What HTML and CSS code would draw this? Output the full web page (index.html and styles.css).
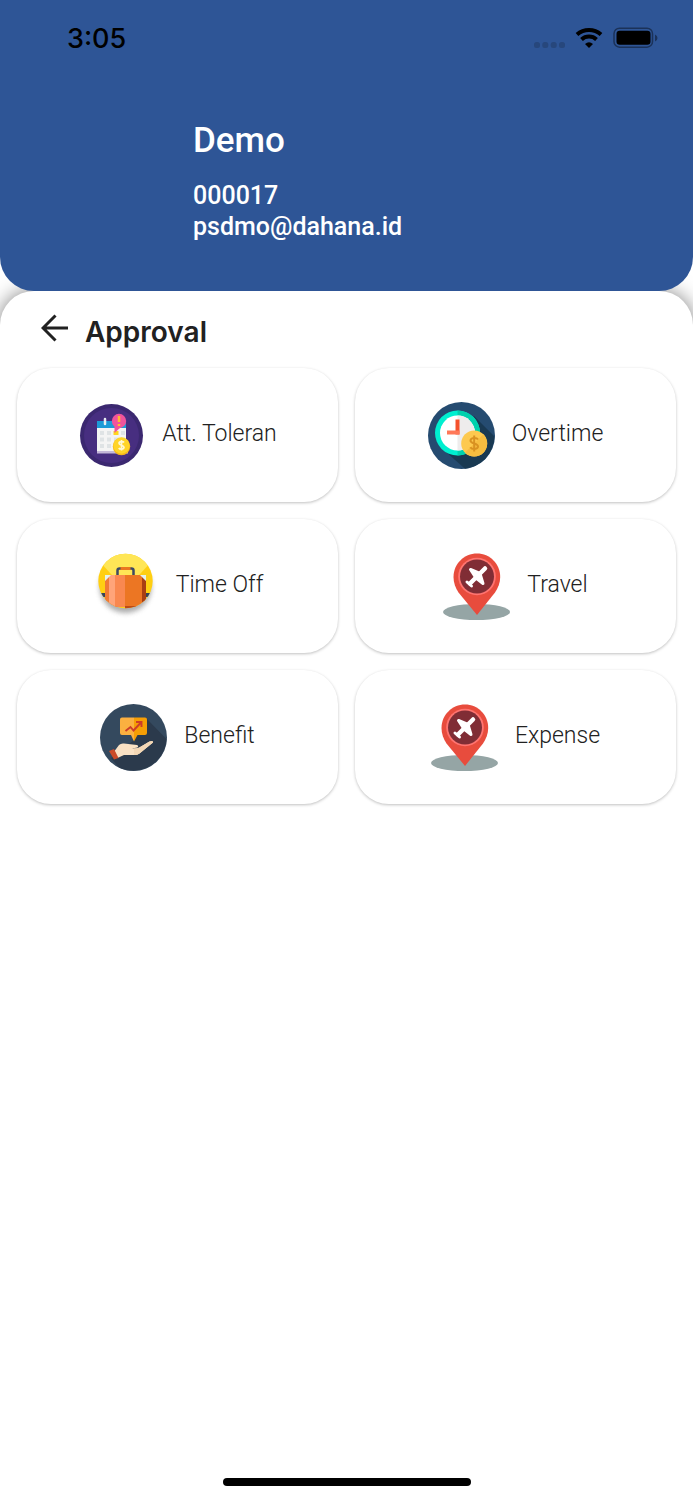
FILE: index.html
```html
<!DOCTYPE html>
<html lang="en">
<head>
<meta charset="utf-8">
<meta name="viewport" content="width=device-width, initial-scale=1">
<title>Approval</title>
<link rel="stylesheet" href="styles.css">
</head>
<body>
<svg class="defs" aria-hidden="true">
  <defs>
    <symbol id="pin" viewBox="0 0 67 67">
      <ellipse cx="33.5" cy="59" rx="33.5" ry="8" fill="#95a5a5"/>
      <path d="M34 .5C21 .5 10.500 11 10.500 24c0 6 2 11 5 15.500L34 62l18-22.500c3-4.500 5.200-9.500 5.200-15.500C57.200 11 47 .5 34 .5z" fill="#e84c3d"/>
      <circle cx="34" cy="23.500" r="18.800" fill="#ff7470"/>
      <circle cx="34" cy="23.500" r="17" fill="#802d35"/>
      <g fill="none" stroke="#fff" stroke-linecap="round" stroke-linejoin="round">
        <path d="M42 15.500L27 30.500" stroke-width="4.500"/>
        <path d="M27.500 16.500L37 20.500L40 30.500L33 25z" fill="#fff" stroke-width="3"/>
        <path d="M24 29l4.500 4" stroke-width="3"/>
      </g>
    </symbol>
  </defs>
</svg>
<div class="screen">
  <header class="header">
    <div class="status">
      <span class="time">3:05</span>
      <svg class="signals" viewBox="0 0 126 24" aria-hidden="true">
        <g fill="#27477c"><rect x="0" y="16" width="6" height="6" rx="2.500"/><rect x="8.300" y="16" width="6" height="6" rx="2.500"/><rect x="16.700" y="16" width="6" height="6" rx="2.500"/><rect x="25" y="16" width="6" height="6" rx="2.500"/></g>
        <g fill="none" stroke="#000"><path d="M43 8.500a18 18 0 0 1 24 0" stroke-width="4"/><path d="M47.500 13.500a11 11 0 0 1 15 0" stroke-width="4"/></g>
        <path d="M51 18q4-3.500 8 0l-4 4z"/>
        <rect x="80" y="2.200" width="38.500" height="19" rx="5.500" fill="none" stroke="#1b3259" stroke-width="1.500"/>
        <rect x="82.500" y="4.700" width="34" height="14" rx="3.200"/>
        <path d="M121 8.500q2.500 1 2.500 3.500t-2.500 3.500z" fill="#1b3259"/>
      </svg>
    </div>
    <div class="profile">
      <h1 class="name">Demo</h1>
      <p class="detail">000017</p>
      <p class="detail">psdmo@dahana.id</p>
    </div>
  </header>
  <main class="sheet">
    <div class="title-row">
      <button class="back" type="button" aria-label="Back">
        <svg viewBox="0 0 28 28" fill="none" stroke="#212121" stroke-width="3"><path d="M27 14H3M14.500 1.500L2 14l12.500 12.500"/></svg>
      </button>
      <h2 class="title">Approval</h2>
    </div>
    <nav class="grid">
      <button class="card" type="button">
        <svg class="icon" viewBox="0 0 67 67" aria-hidden="true">
          <circle cx="33.500" cy="33.500" r="31.500" fill="#3b2870"/><circle cx="33.500" cy="33.500" r="27.500" fill="#472e80"/>
          <path d="M19 49h31v2.500H19z" fill="#c4b8d8"/><path d="M19 22h29v27H19z" fill="#f4f4f4"/><path d="M19 19h29v7H19z" fill="#1c9bd7"/>
          <path d="M27 17v5" stroke="#e8eef2" stroke-width="2.500" stroke-linecap="round"/>
          <g fill="#dfe3e5"><path d="M22 29h4v4h-4zM29 29h4v4h-4zM22 35.500h4v4h-4zM29 35.500h4v4h-4zM36 35.500h4v4h-4zM22 42h4v4h-4zM29 42h4v4h-4zM43 29h4v4h-4z"/></g>
          <path d="M35.500 29h5v4h-5z" fill="#ffd51f"/>
          <circle cx="41" cy="19" r="7.200" fill="#f0539c"/><path d="M36.500 23v8l6.500-6z" fill="#f0539c"/>
          <path d="M41 14v6M41 22v2" stroke="#ffba30" stroke-width="2.500"/>
          <circle cx="43.500" cy="44.500" r="8.700" fill="#f6b719"/><circle cx="43.500" cy="43.500" r="8.200" fill="#ffd428"/>
          <path d="M46 40.500c-1-1.500-5-1.200-5 .8s5 1.800 5 4-4.200 2.400-5.200.7M43.500 38v10.500" fill="none" stroke="#fff8d6" stroke-width="1.700"/>
        </svg>
        <span class="label">Att. Toleran</span>
      </button>
      <button class="card" type="button">
        <svg class="icon" viewBox="0 0 67 67" aria-hidden="true">
          <circle cx="33.500" cy="33.500" r="33.500" fill="#254b70"/>
          <path d="M46 14l20.500 20.500A33.500 33.500 0 0 1 37 66.800L13.500 46z" fill="#193952"/>
          <circle cx="29.500" cy="31" r="22.500" fill="#00efd0"/><path d="M29.500 8.500a22.500 22.500 0 0 1 0 45z" fill="#00d1ad"/>
          <circle cx="29.500" cy="31" r="17.500" fill="#fff"/><path d="M29.500 13.500a17.500 17.500 0 0 1 0 35z" fill="#eeecec"/>
          <path d="M27.500 17.500h4v15h-4z" fill="#f4512c"/><path d="M19 28.500h12.500v4H19z" fill="#ff7858"/>
          <circle cx="46.200" cy="41.500" r="13" fill="#fdc94f"/><path d="M37 50.700a13 13 0 0 0 18.400-18.400z" fill="#f6bd40"/>
          <path d="M50 37.500c-1.500-2.500-7.500-2-7.500 1.200s7.500 2.300 7.500 5.600-6 3.600-7.700 1M46.200 33.500v16" fill="none" stroke="#d99221" stroke-width="2"/>
        </svg>
        <span class="label">Overtime</span>
      </button>
      <button class="card" type="button">
        <svg class="icon" viewBox="0 0 67 67" aria-hidden="true">
          <defs><clipPath id="round"><circle cx="33.500" cy="28" r="27.200"/></clipPath><filter id="soft" x="-30%" y="-30%" width="160%" height="160%"><feGaussianBlur stdDeviation="2.500"/></filter></defs>
          <circle cx="33.500" cy="34" r="26" fill="#777" opacity=".6" filter="url(#soft)"/>
          <g clip-path="url(#round)">
            <path d="M0 0h67v56H0z" fill="#ffcf12"/><path d="M0 0h67L33.500 37z" fill="#ffe656"/>
            <path d="M5 40h57v4H5z" fill="#34445c"/>
            <path d="M25.500 22v-4.500q0-2 2-2h12q2 0 2 2V22" fill="none" stroke="#3d4963" stroke-width="2.500"/><path d="M28.500 15.500h10" stroke="#ea7520" stroke-width="3"/>
            <rect x="13" y="22" width="41" height="32" rx="4" fill="#ec7623"/>
            <path d="M13 26q0-4 5-4v32h-5z" fill="#f07a35"/><path d="M17 22h6v32h-6z" fill="#ffa47a"/><path d="M23 22h10v32H23z" fill="#f98850"/>
            <path d="M50 22q4 0 4 4v28h-4z" fill="#a93e13"/>
            <path d="M13 28v-6h6zM54 28v-6h-6z" fill="#e4f3ec"/><path d="M33 53h17v4H33z" fill="#bd4a18"/>
          </g>
        </svg>
        <span class="label">Time Off</span>
      </button>
      <button class="card" type="button">
        <svg class="icon" aria-hidden="true"><use href="#pin"/></svg>
        <span class="label">Travel</span>
      </button>
      <button class="card" type="button">
        <svg class="icon" viewBox="0 0 67 67" aria-hidden="true">
          <circle cx="33.500" cy="33.500" r="33.500" fill="#34495e"/>
          <path d="M46.500 14.500L66.500 35A33.500 33.500 0 0 1 19 63.500L11 54l23-18z" fill="#2b3a4c"/>
          <path d="M22 13.500h12v24l-3-6.500h-9q-2 0-2-2v-13.500q0-2 2-2z" fill="#fbb040"/><path d="M34 13.500h11q2 0 2 2V29q0 2-2 2h-7.500L34 37.500z" fill="#f59e05"/>
          <path d="M25.500 27l5-4 3 3.500 7.500-8M36 18h5.500v5" fill="none" stroke="#cc3c29" stroke-width="1.900"/>
          <path d="M14.500 47l4.500-6q2-2 5-1.500l13 1.500q2 1 .5 2.500L32 44.500q6 .5 9-2L49.500 37.500q4-1.500 3.500 1L39.500 49.500q-2 1.500-5 1.500H24l-6.500 3z" fill="#f9e1c4"/>
          <path d="M34 44.500q5 0 7-2l8.500-5q4-1.500 3.500 1L39.500 49.500q-2 1.500-5.500 1.500z" fill="#f3d7b5"/>
          <path d="M9 47l5-2 4.500 9-4.500 1.500z" fill="#cb4b28"/>
        </svg>
        <span class="label">Benefit</span>
      </button>
      <button class="card" type="button">
        <svg class="icon" aria-hidden="true"><use href="#pin"/></svg>
        <span class="label">Expense</span>
      </button>
    </nav>
    <div class="home-bar"></div>
  </main>
</div>
</body>
</html>
```
FILE: styles.css
```css
* { box-sizing: border-box; }
body {
  margin: 0;
  background: #fff;
  color: #212121;
  font-family: Roboto, "Liberation Sans", sans-serif;
}
h1, h2, p { margin: 0; }
button {
  border: 0;
  padding: 0;
  background: none;
  color: inherit;
  font: inherit;
  cursor: pointer;
}
.defs { position: absolute; width: 0; height: 0; }
.screen {
  display: flex;
  flex-direction: column;
  min-height: 100vh;
  overflow: hidden;
}
.header {
  position: relative;
  z-index: 1;
  padding: 22px 33px 49px 67px;
  border-radius: 0 0 34px 34px;
  background: #2e5596;
  color: #fff;
}
.status {
  display: flex;
  align-items: center;
  justify-content: space-between;
  height: 32px;
}
.time {
  padding-top: 2px;
  color: #000;
  font: 500 27px/32px Inter, sans-serif;
}
.signals { width: 126px; height: 24px; }
.profile { padding: 64px 0 0 126px; }
.name {
  margin-bottom: 16px;
  font-size: 35px;
  font-weight: 500;
  line-height: 46px;
}
.detail {
  font-size: 25px;
  font-weight: 500;
  line-height: 31px;
}
.sheet {
  display: flex;
  flex: 1;
  flex-direction: column;
  padding: 18px 17px 14px;
  border-radius: 34px 34px 0 0;
  background: #fff;
  box-shadow: 0 0 20px rgba(0, 0, 0, .5);
}
.title-row {
  display: flex;
  align-items: center;
  gap: 16px;
  height: 44px;
  padding-left: 24px;
}
.back { display: flex; padding-bottom: 6px; }
.back svg { width: 28px; height: 28px; }
.title {
  padding-top: 2px;
  font: 600 28px/40px Inter, sans-serif;
}
.grid {
  display: grid;
  grid-template-columns: 1fr 1fr;
  gap: 17px;
  margin-top: 15px;
}
.card {
  display: flex;
  align-items: center;
  justify-content: center;
  gap: 17px;
  height: 134px;
  border-radius: 34px;
  background: #fff;
  box-shadow: 0 1px 3px rgba(0, 0, 0, .25);
}
.icon { width: 67px; height: 67px; }
.label {
  padding-bottom: 2px;
  font-size: 23px;
  font-weight: 300;
  line-height: 32px;
}
.home-bar {
  width: 248px;
  height: 8px;
  margin: auto auto 0;
  border-radius: 4px;
  background: #000;
}
```
